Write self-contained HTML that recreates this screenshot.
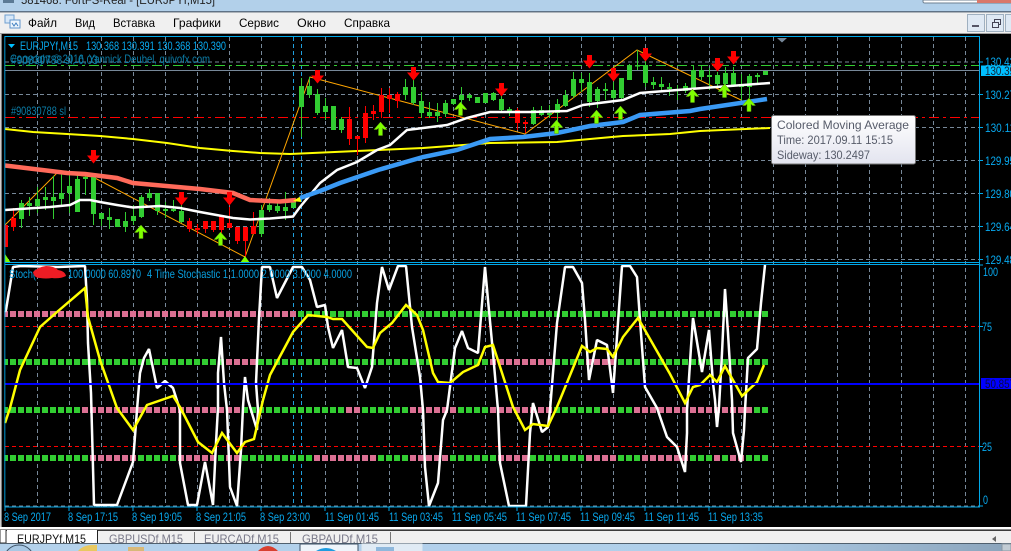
<!DOCTYPE html>
<html><head><meta charset="utf-8"><style>
html,body{margin:0;padding:0;background:#000}
svg{display:block}
text{font-family:"Liberation Sans",sans-serif}
</style></head><body>
<svg width="1011" height="551" viewBox="0 0 1011 551" xmlns="http://www.w3.org/2000/svg" style="overflow:hidden">
<defs>
<linearGradient id="tg" x1="0" y1="0" x2="0" y2="1"><stop offset="0" stop-color="#ffffff"/><stop offset="1" stop-color="#e3e4ef"/></linearGradient>
<linearGradient id="tb" x1="0" y1="0" x2="1" y2="0"><stop offset="0" stop-color="#b4d2ec"/><stop offset=".72" stop-color="#b0cfea"/><stop offset="1" stop-color="#8ba4bb"/></linearGradient>
<g id="d"><path d="M-2.500-7H2.500V-1.500H6.500L0 6.500-6.500-1.500H-2.500Z" fill="#f00"/></g>
<g id="u"><path d="M0-7L6.500 .5 3.500 .5 2-1V6.500H-2V-1L-3.500 .5-6.500 .5Z" fill="#7fff00" stroke="#5a9a10" stroke-width=".5"/></g>
</defs>
<rect width="1011" height="551" fill="#000"/>

<!-- title bar -->
<rect width="1011" height="12" fill="#b2d0ea"/>
<rect x="3" y="0" width="11" height="3" fill="#5b7a95"/>
<text x="21" y="4" font-size="12" fill="#222" textLength="194" lengthAdjust="spacingAndGlyphs">581468: FortFS-Real - [EURJPYf,M15]</text>
<path d="M923 0V1.500Q923 3 925 3H1011V0Z" fill="#fff" stroke="#6d7f90"/>
<rect x="977" y="0" width="34" height="3" fill="#d9776a"/>
<rect y="11" width="1011" height="1.400" fill="#5f7286"/>

<!-- menu -->
<rect y="12.400" width="1011" height="21" fill="#f0f0f0"/>
<rect y="33" width="1011" height="1" fill="#a0a0a0"/>
<rect x="5" y="15" width="9" height="8" fill="#d8e8f8" stroke="#6f9fd0"/>
<rect x="10" y="20" width="10" height="8" fill="#eef5fc" stroke="#5f95cc"/>
<path d="M12 23l2 3 2-3 2 3" stroke="#3f7fc0" fill="none"/>
<g font-size="12" fill="#000">
<text x="28" y="27" textLength="29" lengthAdjust="spacingAndGlyphs">Файл</text>
<text x="75" y="27" textLength="20" lengthAdjust="spacingAndGlyphs">Вид</text>
<text x="113" y="27" textLength="42" lengthAdjust="spacingAndGlyphs">Вставка</text>
<text x="173" y="27" textLength="48" lengthAdjust="spacingAndGlyphs">Графики</text>
<text x="239" y="27" textLength="40" lengthAdjust="spacingAndGlyphs">Сервис</text>
<text x="297" y="27" textLength="29" lengthAdjust="spacingAndGlyphs">Окно</text>
<text x="344" y="27" textLength="46" lengthAdjust="spacingAndGlyphs">Справка</text>
</g>
<g fill="#dfe9f4" stroke="#9fb0c0">
<rect x="967.500" y="14.500" width="17" height="17"/><rect x="986.500" y="14.500" width="17" height="17"/><rect x="1005.500" y="14.500" width="10" height="17"/>
</g>
<rect x="972" y="25" width="7" height="2" fill="#556"/>
<path d="M992.500 22.500h6v5h-6zM994.500 22v-2.500h6v5h-2" fill="none" stroke="#445"/>

<!-- grid main + sub -->
<path d="M37.500 37V507M69.500 37V507M101.500 37V507M133.500 37V507M165.500 37V507M197.500 37V507M229.500 37V507M261.500 37V507M325.500 37V507M357.500 37V507M389.500 37V507M421.500 37V507M453.500 37V507M485.500 37V507M517.500 37V507M549.500 37V507M581.500 37V507M613.500 37V507M645.500 37V507M677.500 37V507M709.500 37V507M741.500 37V507M773.500 37V507M805.500 37V507M837.500 37V507M869.500 37V507M901.500 37V507M933.500 37V507M965.500 37V507" stroke="#778899" stroke-dasharray="4 3" fill="none"/>
<path d="M293.500 37V507M301.500 37V507" stroke="#1f9fdf" stroke-dasharray="4 3" fill="none"/>
<path d="M5 62H979M5 94.500H979M5 127.500H979M5 160.500H979M5 193.500H979M5 226.500H979M5 259.500H979M5 506H979" stroke="#778899" stroke-dasharray="4 3" fill="none"/>
<path d="M5 65.500H979" stroke="#32cd32" stroke-dasharray="10 4 3 4" fill="none"/>
<path d="M5 70.500H979" stroke="#778899" fill="none"/>
<path d="M5 117.500H979" stroke="#f00" stroke-dasharray="10 4 3 4" fill="none"/>
<path d="M5 326.500H979M5 446.500H979" stroke="#f00" stroke-dasharray="4 3" fill="none"/>

<!-- main chart -->
<path d="M5 129L33 132 67 134 100 136 133 139 167 143 200 148 233 151 260 153 290 154 357 151 423 148 490 143 557 142 623 136 670 134 700 131 770 128" stroke="#ff0" stroke-width="2" fill="none"/>
<polyline points="5,225 57,173 93,177 245,257 310,77 525,134 637,50 741,100" stroke="#ffa500" fill="none"/>
<path d="M5.500 225V247M13.500 208V231M189.500 218V232M197.500 224V234M205.500 221V233M213.500 221V232M221.500 215V233M229.500 207V228M237.500 227V244M245.500 227V257M253.500 212V234M349.500 107V145M357.500 136V155M365.500 106V143M373.500 105V120M381.500 88V118M389.500 88V113M397.500 92V108M517.500 108V130M525.500 120V133" stroke="#f00" fill="none"/>
<path d="M5.500 225V247M13.500 218V227M189.500 221V229M197.500 228V230M205.500 221V229M213.500 221V230M221.500 215V230M229.500 223V228M237.500 227V241M245.500 227V241M253.500 226V234M349.500 119V139M357.500 136V139M365.500 113V138M373.500 111V114M381.500 95V112M389.500 95V99M397.500 94V101M517.500 110V123M525.500 122V124" stroke="#f00" stroke-width="5" fill="none"/>
<path d="M21.500 200V228M29.500 197V216M37.500 187V213M45.500 187V210M53.500 176V219M61.500 173V207M69.500 175V213M77.500 172V212M85.500 172V195M93.500 173V225M101.500 213V226M109.500 208V229M117.500 219V227M125.500 212V232M133.500 205V225M141.500 195V218M149.500 189V201M157.500 193V215M165.500 202V218M173.500 200V212M181.500 205V223M261.500 205V237M269.500 198V212M277.500 200V213M285.500 192V220M293.500 202V208M301.500 78V137M309.500 77V98M317.500 89V115M325.500 98V120M333.500 106V130M341.500 117V133M405.500 79V100M413.500 72V105M421.500 92V118M429.500 102V118M437.500 103V122M445.500 100V117M453.500 99V105M461.500 87V109M469.500 93V101M477.500 97V103M485.500 93V103M493.500 92V101M501.500 93V112M509.500 107V116M533.500 107V125M541.500 106V116M549.500 105V118M557.500 99V130M565.500 90V107M573.500 72V98M581.500 73V92M589.500 73V107M597.500 87V108M605.500 83V100M613.500 82V102M621.500 78V100M629.500 64V80M637.500 50V70M645.500 60V87M653.500 77V89M661.500 77V92M669.500 83V96M677.500 85V100M685.500 83V93M693.500 65V90M701.500 65V80M709.500 68V90M717.500 72V86M725.500 67V97M733.500 67V87M741.500 74V100M749.500 74V98M757.500 73V85" stroke="#32cd32" fill="none"/>
<path d="M21.500 203V219M29.500 203V206M37.500 199V206M45.500 197V200M53.500 197V201M61.500 193V199M69.500 186V193M77.500 179V212M85.500 177V179M93.500 175V214M101.500 213V219M109.500 217V220M117.500 219V227M125.500 221V227M133.500 216V221M141.500 197V217M149.500 193V198M157.500 193V211M165.500 209V211M173.500 209V211M181.500 211V222M261.500 210V234M269.500 205V210M277.500 206V211M285.500 207V211M293.500 202V208M301.500 86V107M309.500 86V95M317.500 94V113M325.500 106V112M333.500 106V130M341.500 119V130M405.500 87V95M413.500 87V103M421.500 101V113M429.500 112V116M437.500 112V116M445.500 103V114M453.500 99V104M461.500 95V100M469.500 95V98M477.500 97V103M485.500 93V103M493.500 93V100M501.500 99V110M509.500 109V111M533.500 110V124M541.500 110V115M549.500 113V115M557.500 104V113M565.500 95V106M573.500 79V96M581.500 79V83M589.500 82V102M597.500 89V101M605.500 89V91M613.500 90V98M621.500 78V98M629.500 65V80M637.500 65V66.500M645.500 65V83M653.500 82V85M661.500 84V87M669.500 87V89M677.500 89V91M685.500 86V91M693.500 70V88M701.500 70V77M709.500 75V77M717.500 75V84M725.500 73V84M733.500 73V85M741.500 84V87M749.500 76V87M757.500 75V77M765.500 71V75" stroke="#32cd32" stroke-width="5" fill="none"/>
<polyline points="5,210 50,207 70,205 80,200 90,200 100,202 117,205 133,207.500 160,206 180,208 200,212 233,218 250,219.500 270,218.500 293,216.500 300,207 320,183 337,170 357,162 377,150 390,145 407,130 423,128 447,125 467,118 490,112 530,112 567,111 583,105 623,100 640,93 690,89 770,83" stroke="#fff" stroke-width="2.500" fill="none"/>
<polyline points="5,165.500 67,173 85,174 117,178 133,183 200,189 233,193 250,200 280,201.500 296,200" stroke="#ff6a5a" stroke-width="4.500" fill="none"/>
<path d="M293 201L301 196V202Z" fill="#ff0"/>
<polyline points="300,198 320,191 340,183 378,170 423,157 457,150 490,139 523,137 557,133 590,126 623,122 640,115 690,111 700,109 767,99" stroke="#3a9af5" stroke-width="4.500" fill="none"/>
<path d="M240 263L245 256 250 263ZM5 263V254L11 263Z" fill="#7fff00"/>

<use href="#d" x="93.500" y="157"/><use href="#d" x="181.500" y="199"/><use href="#d" x="229.500" y="199"/><use href="#d" x="317.500" y="77"/><use href="#d" x="413.500" y="74"/><use href="#d" x="501.500" y="90"/><use href="#d" x="589.500" y="62"/><use href="#d" x="613.500" y="75"/><use href="#d" x="645.500" y="55"/><use href="#d" x="717.500" y="65"/><use href="#d" x="733.500" y="58"/>
<use href="#u" x="141" y="232"/><use href="#u" x="220.500" y="239"/><use href="#u" x="380.500" y="129"/><use href="#u" x="460.500" y="109"/><use href="#u" x="556.500" y="127"/><use href="#u" x="596.500" y="117"/><use href="#u" x="620.500" y="113"/><use href="#u" x="692.500" y="96"/><use href="#u" x="724.500" y="91"/><use href="#u" x="749" y="105"/>

<!-- level bars -->
<g stroke-width="6" stroke-dasharray="6 2" fill="none">
<path stroke="#db7093" d="M2 314H298M226 362H258M490 362H554M586 362H618M82 410H242M346 410H362M410 410H458M490 410H554M602 410H618M634 410H754M90 458H138M178 458H218M226 458H242M314 458H378M410 458H450M498 458H530M586 458H618M642 458H690M714 458H722M730 458H746"/>
<path stroke="#32cd32" d="M298 314H770M2 362H226M258 362H490M554 362H586M618 362H770M2 410H82M242 410H346M362 410H410M458 410H490M554 410H602M618 410H634M754 410H770M2 458H90M138 458H178M218 458H226M242 458H314M378 458H410M450 458H498M530 458H586M618 458H642M690 458H714M722 458H730M746 458H770"/>
</g>

<!-- stochastic -->
<polyline points="5,312 6,310 13,267 21,266 58,267 85,266 87,300 88,343 91,393 92,430 94,505 117,505 133,462 137,410 140,373 144,358 149,349 157,388 165,381 173,388 180,410 180,463 188,505 197,505 205,462 213,505 216,443 218,407 218,373 221,337 224,383 227,410 230,487 237,506 241,450 243,407 245,377 248,400 257,430 258,410 256,383 259,318 262,267 270,267 277,298 293,267 302,267 310,280 317,307 325,305 328,327 333,348 342,330 348,367 357,368 365,388 372,367 377,303 382,267 389,290 398,266 406,266 412,327 420,377 423,410 425,467 429,506 438,483 443,420 447,410 455,348 462,331 468,348 478,353 485,267 488,300 493,353 498,410 500,463 509,506 526,506 530,433 533,403 542,432 548,427 550,410 557,323 565,267 573,267 582,283 585,320 589,380 597,340 607,345 613,393 622,266 630,266 637,277 640,320 645,387 657,408 667,437 677,447 685,472 687,433 687,410 691,347 693,318 702,372 709,330 713,383 715,400 717,427 719,407 722,353 725,289 728,333 732,400 733,433 741,462 744,430 745,410 748,358 757,349 761,303 765,265" stroke="#fff" stroke-width="2.500" fill="none" stroke-linejoin="bevel"/>
<polyline points="5,423 10,408 20,370 40,327 57,312 85,288 88,317 100,360 117,408 133,430 147,405 173,396 180,407 198,442 212,453 222,433 237,453 245,442 254,439 263,400 270,375 293,332 308,315 327,317 333,319 342,319 367,347 373,348 380,333 392,323 406,305 417,315 423,330 433,373 438,382 450,383 463,372 478,365 485,347 493,345 513,407 525,430 533,424 548,426 557,407 582,346 590,352 597,348 607,349 613,357 623,337 638,318 670,374 685,403 693,387 700,385 710,375 717,382 725,366 742,396 757,382 764,365" stroke="#ff0" stroke-width="2.500" fill="none"/>
<path d="M5 384H979" stroke="#0000ff" stroke-width="2" fill="none"/>

<!-- frames -->
<path d="M5 36.500H979.500V507H5M5 262.500H979.500M5 264.500H979.500M4.800 36V507" stroke="#00a8e8" fill="none"/>
<path d="M5 507V511M69 507V511M133 507V511M197 507V511M261 507V511M325 507V511M389 507V511M453 507V511M517 507V511M581 507V511M645 507V511M709 507V511" stroke="#00a8e8" fill="none"/>
<path d="M980 62h3M980 94.500h3M980 127.500h3M980 160.500h3M980 193.500h3M980 226.500h3M980 259.500h3M980 265h3M980 326.500h3M980 446.500h3M980 506h3" stroke="#00a8e8" fill="none"/>
<path d="M777 38H787L782 42.500Z" fill="#778899"/>

<!-- header texts -->
<path d="M8 44H15L11.500 48Z" fill="#00bfff"/>
<g font-size="12" fill="#08aaf0">
<text x="20" y="50" textLength="58" lengthAdjust="spacingAndGlyphs">EURJPYf,M15</text>
<text x="86" y="50" textLength="140" lengthAdjust="spacingAndGlyphs">130.368 130.391 130.368 130.390</text>
</g>
<g font-size="12" fill="#0b7da8">
<text x="10" y="63" textLength="200" lengthAdjust="spacingAndGlyphs">Copyright © 2016, Yannick Deubel, quivofx.com</text>
<text x="11" y="64" textLength="87" lengthAdjust="spacingAndGlyphs">#90830788 sl, 0.03</text>
<text x="11" y="115" textLength="55" lengthAdjust="spacingAndGlyphs">#90830788 sl</text>
</g>
<g font-size="12" fill="#08a0e0">
<text x="9" y="278" textLength="27" lengthAdjust="spacingAndGlyphs">Stoch(</text>
<text x="68" y="278" textLength="73" lengthAdjust="spacingAndGlyphs">100.0000 60.8970</text>
<text x="147" y="278" textLength="205" lengthAdjust="spacingAndGlyphs">4 Time Stochastic 1 1.0000 2.0000 3.0000 4.0000</text>
</g>
<path d="M33 272Q38 267 46 266 54 266 58 270 65 271 66 276 60 279 52 278 46 279 40 278 34 278 33 272Z" fill="#ed1c24"/>

<!-- right axis -->
<g font-size="12" fill="#08aaf0">
<text x="985" y="66" textLength="30" lengthAdjust="spacingAndGlyphs">130.43</text>
<text x="985" y="99" textLength="30" lengthAdjust="spacingAndGlyphs">130.27</text>
<text x="985" y="132" textLength="30" lengthAdjust="spacingAndGlyphs">130.11</text>
<text x="985" y="165" textLength="30" lengthAdjust="spacingAndGlyphs">129.95</text>
<text x="985" y="198" textLength="30" lengthAdjust="spacingAndGlyphs">129.80</text>
<text x="985" y="231" textLength="30" lengthAdjust="spacingAndGlyphs">129.64</text>
<text x="985" y="264" textLength="30" lengthAdjust="spacingAndGlyphs">129.48</text>
<text x="983" y="276" textLength="15" lengthAdjust="spacingAndGlyphs">100</text>
<text x="982" y="331" textLength="10" lengthAdjust="spacingAndGlyphs">75</text>
<text x="982" y="451" textLength="10" lengthAdjust="spacingAndGlyphs">25</text>
<text x="983" y="504" textLength="5" lengthAdjust="spacingAndGlyphs">0</text>
</g>
<rect x="981" y="65.500" width="30" height="10.500" fill="#00bfff"/>
<text x="985" y="75" font-size="12" fill="#123" textLength="30" lengthAdjust="spacingAndGlyphs">130.39</text>
<rect x="981" y="378" width="30" height="11" fill="#0000ff"/>
<text x="985" y="388" font-size="12" fill="#0a0a40" textLength="30" lengthAdjust="spacingAndGlyphs">50.857</text>

<!-- x axis -->
<g font-size="12" fill="#08aaf0">
<text x="4" y="521" textLength="47" lengthAdjust="spacingAndGlyphs">8 Sep 2017</text>
<text x="68" y="521" textLength="50" lengthAdjust="spacingAndGlyphs">8 Sep 17:15</text>
<text x="132" y="521" textLength="50" lengthAdjust="spacingAndGlyphs">8 Sep 19:05</text>
<text x="196" y="521" textLength="50" lengthAdjust="spacingAndGlyphs">8 Sep 21:05</text>
<text x="260" y="521" textLength="50" lengthAdjust="spacingAndGlyphs">8 Sep 23:00</text>
<text x="325" y="521" textLength="54" lengthAdjust="spacingAndGlyphs">11 Sep 01:45</text>
<text x="389" y="521" textLength="54" lengthAdjust="spacingAndGlyphs">11 Sep 03:45</text>
<text x="452" y="521" textLength="55" lengthAdjust="spacingAndGlyphs">11 Sep 05:45</text>
<text x="516" y="521" textLength="55" lengthAdjust="spacingAndGlyphs">11 Sep 07:45</text>
<text x="580" y="521" textLength="55" lengthAdjust="spacingAndGlyphs">11 Sep 09:45</text>
<text x="644" y="521" textLength="55" lengthAdjust="spacingAndGlyphs">11 Sep 11:45</text>
<text x="708" y="521" textLength="55" lengthAdjust="spacingAndGlyphs">11 Sep 13:35</text>
</g>

<!-- tooltip -->
<rect x="771.500" y="115.500" width="144" height="48.500" rx="2" fill="url(#tg)" stroke="#777"/>
<g font-size="12" fill="#575c6a">
<text x="777" y="129" textLength="132" lengthAdjust="spacingAndGlyphs">Colored Moving Average</text>
<text x="777" y="144" textLength="116" lengthAdjust="spacingAndGlyphs">Time: 2017.09.11 15:15</text>
<text x="777" y="159" textLength="93" lengthAdjust="spacingAndGlyphs">Sideway: 130.2497</text>
</g>

<!-- left strip -->
<rect x="0" y="34" width="4.200" height="494" fill="#000"/>
<rect x="0" y="34" width="1.600" height="494" fill="#cfcfcf"/>

<!-- bottom tabs -->
<rect y="527" width="1011" height="2.600" fill="#fff"/>
<rect y="529.600" width="1011" height="1.200" fill="#111"/>
<rect y="530.800" width="1011" height="13" fill="#f0f0f0"/>
<path d="M0 530V543H6V530" fill="#fff" stroke="#333"/>
<rect x="7" y="530" width="90.500" height="14" fill="#fff"/>
<path d="M97.500 530V543" stroke="#222"/>
<path d="M194.500 532V543M290.500 532V543M390.500 532V543" stroke="#777"/>
<text x="17" y="543" font-size="12" fill="#111" textLength="69" lengthAdjust="spacingAndGlyphs">EURJPYf,M15</text>
<g font-size="12" fill="#7a7a8a">
<text x="109" y="543" textLength="74" lengthAdjust="spacingAndGlyphs">GBPUSDf,M15</text>
<text x="204" y="543" textLength="75" lengthAdjust="spacingAndGlyphs">EURCADf,M15</text>
<text x="302" y="543" textLength="76" lengthAdjust="spacingAndGlyphs">GBPAUDf,M15</text>
</g>
<path d="M996 536V542L992 539Z" fill="#666"/>

<!-- taskbar -->
<rect y="543" width="1011" height="8" fill="url(#tb)"/>
<rect y="543" width="1011" height="1" fill="#50606e"/>
<circle cx="19" cy="560" r="15" fill="#a8c8e4" stroke="#3f5468"/>
<path d="M78 551Q84 544 97 545V551Z" fill="#e8c860"/>
<rect x="128" y="547" width="16" height="4" fill="#d8b878"/>
<path d="M258 551Q268 541 278 551Z" fill="#d84030"/>
<rect x="300" y="544" width="58" height="8" fill="#eef5fb" stroke="#3f5468"/>
<path d="M316 551Q326 545 336 551Z" fill="#1e9ce0"/>
<rect x="362" y="544" width="60" height="8" fill="#e0ebf5" stroke="#dfe8f0"/>
<rect x="376" y="547" width="18" height="4" fill="#8fb8dc"/>
<rect x="1002" y="544" width="9" height="7" fill="#c2ccd4" stroke="#8a98a4"/>
</svg>
</body></html>
